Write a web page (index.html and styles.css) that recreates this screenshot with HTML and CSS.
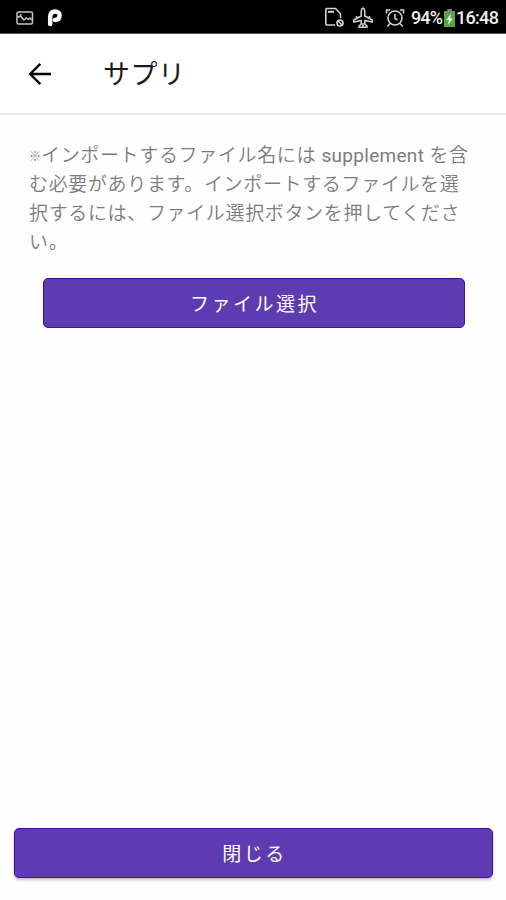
FILE: index.html
```html
<!DOCTYPE html>
<html lang="ja">
<head>
    <meta charset="UTF-8">
    <meta name="viewport" content="width=device-width, initial-scale=1.0">
    <title>サプリ</title>
    <link rel="stylesheet" href="styles.css">
</head>
<body>
    <div class="status-bar">
        <div class="status-left">
            <svg class="icon-picture" width="18" height="14" viewBox="0 0 18 14" fill="none" stroke="#c4c4c4" stroke-width="1.5">
                <rect x="1" y="1" width="15.5" height="12" rx="1.5"/>
                <path d="M1.500 6.500L4.500 5l3.500 4 2.500-2 2 1.500 1.500-1.500 2 2M4 3.800h1.500"/>
            </svg>
            <svg class="icon-p" width="16" height="20" viewBox="0 0 16 20" fill="none" stroke="#fff" stroke-width="4.500" stroke-linecap="round" stroke-linejoin="round">
                <path d="M3.200 16V8.500C3.500 5 5.300 3.500 8.200 3.500C11 3.500 12.800 5 12.600 7.600C12.400 10.300 10.600 12 8 12"/>
            </svg>
        </div>
        <div class="status-right">
            <svg class="icon-sim" width="21" height="21" viewBox="0 0 21 21" fill="none" stroke="#d2d2d2" stroke-width="1.6">
                <path d="M11 18H3a1.200 1.200 0 0 1-1.200-1.200V2.800A1.200 1.200 0 0 1 3 1.500h8.500L16.500 6.800V11"/>
                <path d="M4 4.800h6" stroke-width="2"/>
                <circle cx="16" cy="16" r="3"/>
                <path d="M14 14l4 4"/>
            </svg>
            <svg class="icon-plane" width="22" height="22" viewBox="0 0 22 22" fill="none" stroke="#d2d2d2" stroke-width="1.5" stroke-linejoin="round">
                <path d="M11 1C9.800 1.500 9.200 3 9.200 4.500V9L1.700 13v2l7.500-1.600V17L7 19v1.300h8V19l-2.200-2v-3.600L20.300 15v-2L12.800 9V4.500C12.800 3 12.200 1.500 11 1zM11 16v5M4.500 9v3M17.500 9v3"/>
            </svg>
            <svg class="icon-alarm" width="20" height="20" viewBox="0 0 20 20" fill="none" stroke="#d2d2d2" stroke-width="1.6">
                <circle cx="10" cy="10" r="7"/>
                <path d="M10 6v4.500l2.500 1.500M1.500 5.500V2H5M18.500 5.500V2H15M4.800 15.500l-2.500 3M15.200 15.500l2.500 3"/>
            </svg>
            <span class="battery-text">94%</span>
            <svg class="icon-battery" width="11" height="18" viewBox="0 0 11 18">
                <path d="M3.500 0h4v2H11v16H0V2h3.500z" fill="#56a83c"/>
                <path d="M3.500 0h4v2H11v2H0V2h3.500z" fill="#7c8979"/>
                <path d="M6.800 5L2.300 11H5l-1 5 4.700-6.500H6z" fill="#fff"/>
            </svg>
            <span class="clock">16:48</span>
        </div>
    </div>

    <header class="app-bar">
        <svg class="back-arrow" width="24" height="24" viewBox="0 0 24 24" fill="none" stroke="#000" stroke-width="2.400">
            <path d="M23 12H2.500M12.300 1.800L2.200 12l10.100 10.200"/>
        </svg>
        <h1>サプリ</h1>
    </header>

    <main class="content">
        <p class="description"><span class="note-mark">※</span>インポートするファイル名には <span class="latin">supplement</span> を含<br>む必要があります。インポートするファイルを選<br>択するには、ファイル選択ボタンを押してくださ<br>い。</p>
        <button class="btn btn-select">ファイル選択</button>
    </main>

    <footer class="footer">
        <button class="btn btn-close">閉じる</button>
    </footer>
</body>
</html>
```
FILE: styles.css
```css
* {
    margin: 0;
    padding: 0;
    box-sizing: border-box;
}

body {
    display: flex;
    flex-direction: column;
    height: 100vh;
    overflow: hidden;
    background-color: #fefefe;
    font-family: Roboto, "Noto Sans CJK JP", sans-serif;
}

.status-bar {
    display: flex;
    justify-content: space-between;
    height: 34px;
    padding: 0 8px 0 16px;
    background-color: #000;
    border-bottom: 1px solid #555;
    color: #eee;
    font-size: 18px;
    font-weight: 500;
}

.status-left,
.status-right {
    display: flex;
    align-items: center;
    height: 35px;
}

.icon-p {
    margin-left: 13px;
}

.icon-plane {
    margin-left: 7px;
}

.icon-alarm {
    margin-left: 11px;
}

.battery-text {
    width: 32px;
    margin-left: 6px;
    letter-spacing: -0.9px;
    white-space: nowrap;
}

.icon-battery {
    margin: 0 1px;
}

.clock {
    width: 42px;
    letter-spacing: -0.7px;
}

.app-bar {
    display: flex;
    align-items: center;
    height: 81px;
    padding: 0 28px;
    background-color: #fff;
    border-bottom: 2px solid #e8e8e8;
}

.app-bar h1 {
    margin: -2px 0 0 51px;
    color: #1c1c1c;
    font-size: 27px;
    font-weight: 400;
    letter-spacing: 0.5px;
}

.content {
    flex: 1;
    padding: 26px 27px 0 29px;
}

.description {
    color: #7c7c7c;
    font-size: 19px;
    font-weight: 350;
    letter-spacing: 0.65px;
    line-height: 29px;
    white-space: nowrap;
}

.note-mark {
    display: inline-block;
    width: 12px;
    font-size: 12px;
    letter-spacing: 0;
    line-height: 1;
    vertical-align: 1px;
}

.latin {
    font-weight: 400;
    letter-spacing: 0.3px;
}

.btn {
    display: block;
    width: 100%;
    height: 50px;
    padding: 0 0 2px 2px;
    border: 1px solid #430e9f;
    border-radius: 5px;
    background-color: #5d3cb2;
    color: #fff;
    font-family: inherit;
    font-size: 19px;
    letter-spacing: 2.5px;
}

.btn-select {
    width: 422px;
    margin: 21px 0 0 13.5px;
}

.footer {
    padding: 0 13px 22px 14px;
}

.btn-close {
    box-shadow: 0 2px 3px rgba(0, 0, 0, 0.25);
}
```
